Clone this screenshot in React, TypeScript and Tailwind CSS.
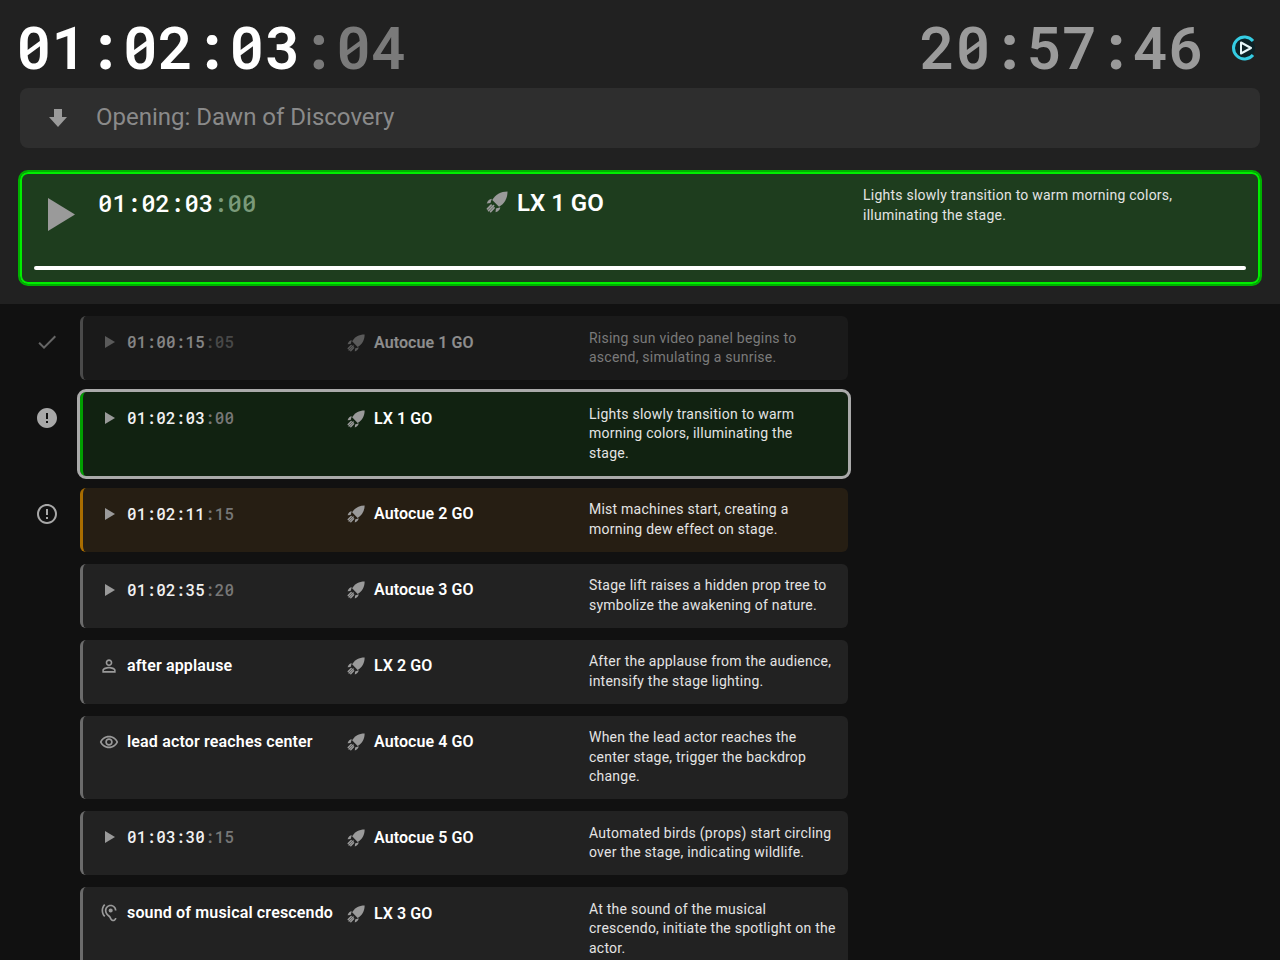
import { MdCheck, MdError, MdErrorOutline, MdOutlineHearing, MdOutlineRemoveRedEye, MdPersonOutline } from "react-icons/md";

const mono = "[font-family:'Roboto_Mono','DejaVu_Sans_Mono',monospace]";

type Row = {
  status?: "done" | "live" | "warn";
  kind: "play" | "person" | "eye" | "ear";
  time?: [string, string];
  label?: string;
  action: string;
  desc: string;
};

const rows: Row[] = [
  { status: "done", kind: "play", time: ["01:00:15", ":05"], action: "Autocue 1 GO", desc: "Rising sun video panel begins to ascend, simulating a sunrise." },
  { status: "live", kind: "play", time: ["01:02:03", ":00"], action: "LX 1 GO", desc: "Lights slowly transition to warm morning colors, illuminating the stage." },
  { status: "warn", kind: "play", time: ["01:02:11", ":15"], action: "Autocue 2 GO", desc: "Mist machines start, creating a morning dew effect on stage." },
  { kind: "play", time: ["01:02:35", ":20"], action: "Autocue 3 GO", desc: "Stage lift raises a hidden prop tree to symbolize the awakening of nature." },
  { kind: "person", label: "after applause", action: "LX 2 GO", desc: "After the applause from the audience, intensify the stage lighting." },
  { kind: "eye", label: "lead actor reaches center", action: "Autocue 4 GO", desc: "When the lead actor reaches the center stage, trigger the backdrop change." },
  { kind: "play", time: ["01:03:30", ":15"], action: "Autocue 5 GO", desc: "Automated birds (props) start circling over the stage, indicating wildlife." },
  { kind: "ear", label: "sound of musical crescendo", action: "LX 3 GO", desc: "At the sound of the musical crescendo, initiate the spotlight on the actor." },
];

function Rocket({ className }: { className: string }) {
  return (
    <svg viewBox="0 0 24 24" className={`flex-none ${className}`}>
      <g fill="#9a9a9a">
        <path d="M23.5 0.5C16 0.5 10 4 6.8 9.8L14.2 17.2C20 14 23.5 8 23.5 0.5Z" />
        <path d="M6.4 8.4C3.8 8.6 2 10.4 0.8 13.6L4.8 13.2Z" />
        <path d="M15.6 17.6C15.4 20.2 13.6 22 10.4 23.2L10.8 19.2Z" />
      </g>
      <g stroke="#9a9a9a" strokeWidth="1.9" strokeLinecap="round" fill="none">
        <path d="M5.6 15.4L1.6 19.4" />
        <path d="M8.2 16L2.8 21.4" />
        <path d="M8.8 18.4L5 22.4" />
      </g>
    </svg>
  );
}

function KindIcon({ kind }: { kind: Row["kind"] }) {
  if (kind === "play")
    return (
      <svg viewBox="0 0 10 12" className="w-[10px] h-[12px] ml-[2px] flex-none fill-[#9a9a9a]">
        <polygon points="0,0 10,6 0,12" />
      </svg>
    );
  if (kind === "person") return <MdPersonOutline className="w-[20px] h-[20px] flex-none text-[#9a9a9a]" />;
  if (kind === "eye") return <MdOutlineRemoveRedEye className="w-[20px] h-[20px] flex-none text-[#9a9a9a]" />;
  return <MdOutlineHearing className="w-[20px] h-[20px] flex-none text-[#9a9a9a]" />;
}

function Status({ s }: { s?: Row["status"] }) {
  if (s === "done") return <MdCheck className="w-[24px] h-[24px] text-[#666]" />;
  if (s === "live") return <MdError className="w-[24px] h-[24px] text-[#a8a8a8]" />;
  if (s === "warn") return <MdErrorOutline className="w-[24px] h-[24px] text-[#a8a8a8]" />;
  return null;
}

function ListRow({ r }: { r: Row }) {
  const live = r.status === "live";
  const done = r.status === "done";
  const warn = r.status === "warn";
  const bg = live
    ? "bg-[#112211] border-l-[#00a000] outline-3 outline-[#aaaaaa]"
    : warn
      ? "bg-[#261e13] border-l-[#a96d00]"
      : done
        ? "bg-[#1a1a1a] border-l-[#4a4a4a]"
        : "bg-[#222222] border-l-[#6b6b6b]";
  return (
    <div className="flex">
      <div className="w-[80px] flex-none flex justify-center pl-[14px] pt-[14px] h-fit">
        <div className="w-[24px] h-[24px] flex items-center justify-center">
          <Status s={r.status} />
        </div>
      </div>
      <div className={`w-[768px] flex-none flex rounded-[6px] border-l-[3px] pl-[16px] pr-[9px] py-[12.4px] ${bg}`}>
        <div className={`w-[246px] flex-none flex items-start mt-[3.6px] ${done ? "opacity-50" : ""}`}>
          <div className="w-[28px] h-[20px] flex-none flex items-center justify-center pr-[8px]">
            <KindIcon kind={r.kind} />
          </div>
          {r.time ? (
            <span className={`${mono} text-[16px] leading-[20px] tracking-[0.16px] font-medium text-[#f0f0f0]`}>
              {r.time[0]}
              <span className="text-[#777]">{r.time[1]}</span>
            </span>
          ) : (
            <span className="text-[16px] leading-[20px] tracking-[0.16px] font-semibold text-white whitespace-nowrap">{r.label}</span>
          )}
        </div>
        <div className={`w-[244px] flex-none flex items-start mt-[4px] pl-[2px] gap-[9px] ${done ? "opacity-50" : ""}`}>
          <Rocket className="w-[18px] h-[18px] mt-[1px]" />
          <span className="text-[16px] leading-[20px] tracking-[0.08px] font-semibold text-white">{r.action}</span>
        </div>
        <p className={`flex-1 text-[14px] leading-[19.6px] tracking-[0.24px] ${live ? "pr-[8px]" : ""} ${done ? "text-[#7a7a7a]" : "text-[#e4e4e4]"}`}>{r.desc}</p>
      </div>
    </div>
  );
}

export default function App() {
  return (
    <div className="w-[1280px] h-[960px] overflow-hidden bg-[#111111] font-['Roboto',sans-serif]">
      <header className="h-[304px] bg-[#212121] px-[20px] pt-[8px]">
        <div className="flex items-center h-[80px]">
          <div className={`${mono} -ml-[4px] -mt-[5px] text-[59.2px] leading-[80px] font-semibold text-white`}>
            01:02:03<span className="text-[#7a7a7a]">:04</span>
          </div>
          <div className={`${mono} ml-auto -mt-[5px] text-[59.2px] leading-[80px] font-semibold text-[#9a9a9a]`}>20:57:46</div>
          <svg viewBox="0 0 24 26" className="w-[24px] h-[26px] ml-[28px] mr-[4px]">
            <circle cx="12" cy="13" r="11" fill="#0c2227" />
            <path d="M21 6A11 11 0 1 0 21 20" fill="none" stroke="#35cde4" strokeWidth="3" />
            <path d="M9 7.5 L19 13 L9 18.5 Z" fill="none" stroke="#e6f6f9" strokeWidth="2" strokeLinejoin="round" />
          </svg>
        </div>
        <div className="h-[60px] rounded-[8px] bg-[#2e2e2e] flex items-center pl-[29px]">
          <svg viewBox="0 0 18 18" className="w-[18px] h-[18px] fill-[#9a9a9a]">
            <polygon points="5,0 13,0 13,8 18,8 9,18 0,8 5,8" />
          </svg>
          <span className="ml-[29px] -mt-[2px] text-[24px] text-[#8a8a8a]">Opening: Dawn of Discovery</span>
        </div>
        <div className="-mx-[2px] mt-[22px] h-[116px] rounded-[10px] border-[2px] border-[#00b000] bg-[#1e3d1e] ring-2 ring-inset ring-[#00ee00] relative">
          <div className="flex pl-[28px] pt-[15px]">
            <svg viewBox="0 0 27 33" className="w-[27px] h-[33px] mt-[11px] flex-none fill-[#9a9a9a]">
              <polygon points="0,0 27,16.5 0,33" />
            </svg>
            <div className={`${mono} ml-[23px] text-[24px] leading-[32px] font-medium text-white w-[388px]`}>
              01:02:03<span className="text-[#7a9a7a]">:00</span>
            </div>
            <Rocket className="w-[22px] h-[22px] mt-[4px]" />
            <div className="ml-[9px] w-[346px] text-[24px] leading-[32px] font-semibold text-white">LX 1 GO</div>
            <p className="w-[340px] -mt-[2px] text-[14px] leading-[20px] tracking-[0.24px] text-[#e4e4e4]">
              Lights slowly transition to warm morning colors, illuminating the stage.
            </p>
          </div>
          <div className="absolute left-[14px] right-[14px] bottom-[14px] h-[4px] rounded-full bg-white" />
        </div>
      </header>
      <main className="pt-[12.4px] flex flex-col gap-[12px]">
        {rows.map((r) => (
          <ListRow key={r.action} r={r} />
        ))}
      </main>
    </div>
  );
}
